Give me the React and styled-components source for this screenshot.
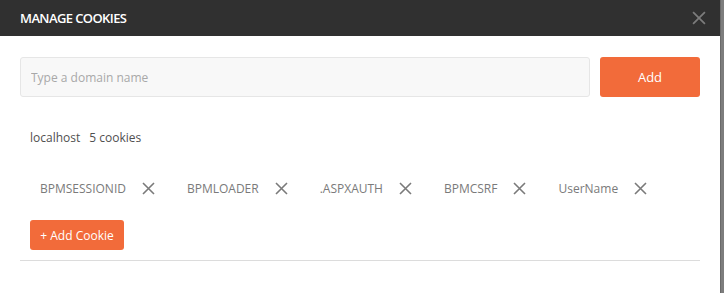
import React from "react";
import styled, { createGlobalStyle } from "styled-components";

const Global = createGlobalStyle`
  html, body { margin: 0; padding: 0; background: #fff; }
  body { font-family: "Open Sans", "Liberation Sans", sans-serif; overflow: hidden; }
  #root { height: 293px; }
`;

const Screen = styled.div`
  display: flex;
  height: 293px;
  width: 724px;
`;

const Modal = styled.div`
  width: 720px;
  flex: none;
  background: #fff;
  display: flex;
  flex-direction: column;
`;

const Backdrop = styled.div`
  flex: 1;
  background: #7d7d7d;
  border-left: 1px solid #6a6a6a;
`;

const Header = styled.div`
  height: 36px;
  background: #303030;
  display: flex;
  align-items: center;
  justify-content: space-between;
  padding: 0 14px 0 20px;
`;

const Title = styled.div`
  color: #fff;
  font-size: 13px;
  font-weight: 600;
  letter-spacing: -0.6px;
`;

const CloseBtn = styled.button`
  border: 0;
  background: none;
  padding: 0;
  display: flex;
  cursor: pointer;
`;

const Body = styled.div`
  padding: 21px 20px 0 20px;
  display: flex;
  flex-direction: column;
`;

const DomainRow = styled.div`
  display: flex;
  gap: 10px;
`;

const DomainInput = styled.input`
  flex: 1;
  height: 40px;
  box-sizing: border-box;
  background: #f8f8f8;
  border: 1px solid #e6e6e6;
  border-radius: 3px;
  padding: 0 10px;
  font-family: inherit;
  font-size: 12px;
  color: #333;
  outline: none;
  &::placeholder { color: #a8a8a8; }
`;

const OrangeButton = styled.button`
  border: 0;
  background: #f26b3a;
  color: #fff;
  border-radius: 3px;
  font-family: inherit;
  font-size: ${(p) => (p.$small ? "12px" : "13px")};
  height: ${(p) => (p.$small ? "30px" : "40px")};
  width: ${(p) => (p.$small ? "94px" : "100px")};
  padding: 0;
  cursor: pointer;
`;

const Domain = styled.div`
  padding: 0 10px;
`;

const DomainHeader = styled.div`
  margin-top: 31px;
  font-size: 12px;
  color: #505050;
  display: flex;
  gap: 9px;
  height: 18px;
  align-items: center;
`;

const CookieList = styled.div`
  display: flex;
  margin-top: 33px;
  height: 18px;
  align-items: center;
`;

const Chip = styled.div`
  display: flex;
  align-items: center;
  padding-left: 10px;
  padding-right: 22px;
`;

const ChipName = styled.span`
  font-size: 12px;
  color: #7a7a7a;
  margin-right: 16px;
`;

const Remove = styled.button`
  border: 0;
  background: none;
  padding: 0;
  display: flex;
  cursor: pointer;
`;

const AddCookieRow = styled.div`
  margin-top: 23px;
  display: flex;
`;

const Divider = styled.hr`
  margin: 10px 0 0 0;
  border: 0;
  border-top: 1px solid #dcdcdc;
`;

const XIcon = ({ color = "#7a7a7a", size = 13 }) => (
  <svg width={size} height={size} viewBox="0 0 13 13">
    <path d="M1 1 L12 12 M12 1 L1 12" stroke={color} strokeWidth="1.6" fill="none" />
  </svg>
);

const cookies = ["BPMSESSIONID", "BPMLOADER", ".ASPXAUTH", "BPMCSRF", "UserName"];

export default function App() {
  return (
    <>
      <Global />
      <Screen>
        <Modal>
          <Header>
            <Title>MANAGE COOKIES</Title>
            <CloseBtn aria-label="close">
              <XIcon color="#7c7c7c" size={14} />
            </CloseBtn>
          </Header>
          <Body>
            <DomainRow>
              <DomainInput placeholder="Type a domain name" />
              <OrangeButton>Add</OrangeButton>
            </DomainRow>
            <Domain>
              <DomainHeader>
                <span>localhost</span>
                <span>5 cookies</span>
              </DomainHeader>
              <CookieList>
                {cookies.map((c) => (
                  <Chip key={c}>
                    <ChipName>{c}</ChipName>
                    <Remove aria-label={`remove ${c}`}>
                      <XIcon />
                    </Remove>
                  </Chip>
                ))}
              </CookieList>
              <AddCookieRow>
                <OrangeButton $small>+ Add Cookie</OrangeButton>
              </AddCookieRow>
            </Domain>
            <Divider />
          </Body>
        </Modal>
        <Backdrop />
      </Screen>
    </>
  );
}
